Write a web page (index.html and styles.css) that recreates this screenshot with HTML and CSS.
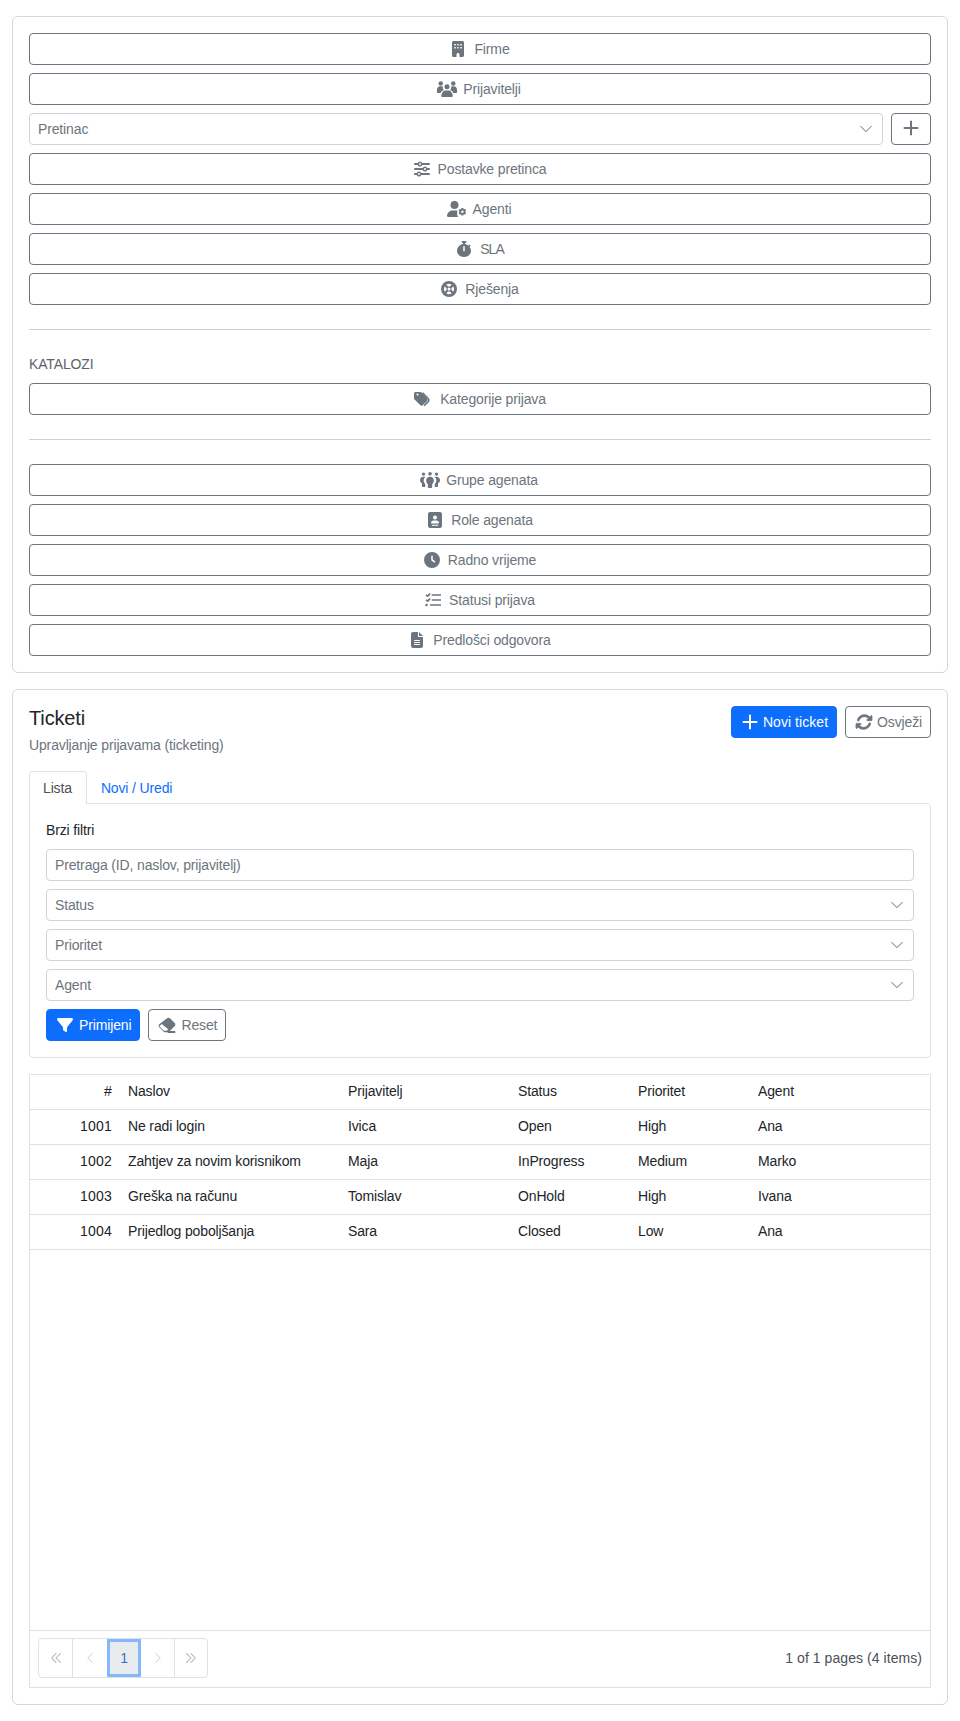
FILE: index.html
```html
<!DOCTYPE html>
<html lang="hr">
<head>
<meta charset="utf-8">
<title>Ticketi</title>
<link rel="stylesheet" href="styles.css">
</head>
<body>
<section class="card">
  <div class="stack">
    <button class="btn btn-wide"><svg class="ico" viewBox="0 0 384 512"><path d="M48 0C21.500 0 0 21.500 0 48v416c0 26.500 21.500 48 48 48h96v-80c0-26.500 21.500-48 48-48s48 21.500 48 48v80h96c26.500 0 48-21.500 48-48V48c0-26.500-21.500-48-48-48H48zm24 96h48v48H72V96zm96 0h48v48h-48V96zm96 0h48v48h-48V96zM72 192h48v48H72v-48zm96 0h48v48h-48v-48zm96 0h48v48h-48v-48z" fill-rule="evenodd"/></svg><span>Firme</span></button>
    <button class="btn btn-wide"><svg class="ico" viewBox="0 0 640 512"><circle cx="320" cy="180" r="80"/><circle cx="120" cy="80" r="72"/><circle cx="520" cy="80" r="72"/><path d="M170 512c-18 0-32-14-32-32 0-90 60-176 134-176h96c74 0 134 86 134 176 0 18-14 32-32 32H170z"/><path d="M0 280c0-60 46-110 100-110h44c16 0 30 4 44 10-8 44 8 84 36 110-50 14-90 50-108 94H30c-16 0-30-14-30-32V280zM640 280c0-60-46-110-100-110h-44c-16 0-30 4-44 10 8 44-8 84-36 110 50 14 90 50 108 94h86c16 0 30-14 30-32V280z"/></svg><span>Prijavitelji</span></button>
    <div class="row">
      <div class="select select-grow"><span>Pretinac</span><svg class="chev" viewBox="0 0 16 16"><path d="M2 5l6 6 6-6"/></svg></div>
      <button class="btn btn-plus"><svg class="ico plus" viewBox="0 0 16 16"><path d="M8 1.500v13M1.500 8h13"/></svg></button>
    </div>
    <button class="btn btn-wide"><svg class="ico" viewBox="0 0 512 512"><path d="M0 416c0-18 14-32 32-32h54a80 80 0 0 1 148 0h246a32 32 0 0 1 0 64H234a80 80 0 0 1-148 0H32c-18 0-32-14-32-32zm160 32a32 32 0 1 0 0-64 32 32 0 0 0 0 64zM352 336a80 80 0 0 1-74-48H32a32 32 0 0 1 0-64h246a80 80 0 0 1 148 0h54a32 32 0 0 1 0 64h-54a80 80 0 0 1-74 48zm32-80a32 32 0 1 0-64 0 32 32 0 0 0 64 0zM192 176a80 80 0 0 1-74-48H32a32 32 0 0 1 0-64h86a80 80 0 0 1 148 0h214a32 32 0 0 1 0 64H266a80 80 0 0 1-74 48zm32-80a32 32 0 1 0-64 0 32 32 0 0 0 64 0z" fill-rule="evenodd"/></svg><span>Postavke pretinca</span></button>
    <button class="btn btn-wide"><svg class="ico" viewBox="0 0 640 512"><circle cx="240" cy="128" r="128"/><path d="M178 304h124c10 0 20 1 30 3-10 20-10 46 0 66-16 24-16 56 0 80 4 24 14 44 28 59H30c-16 0-30-14-30-30 0-98 80-178 178-178z"/><path d="M520 222l16 44 46-8 30 44-30 40 30 42-30 44-46-8-16 44h-56l-16-44-46 8-30-44 30-42-30-40 30-44 46 8 16-44h56zM492 302a40 40 0 1 0 0 80 40 40 0 0 0 0-80z" fill-rule="evenodd"/></svg><span>Agenti</span></button>
    <button class="btn btn-wide"><svg class="ico" viewBox="0 0 448 512"><path d="M176 0h96a32 32 0 0 1 0 64h-16v35c42 6 78 22 106 48l18-18a30 30 0 0 1 42 42l-20 22c30 38 46 84 46 129 0 106-100 190-224 190S0 428 0 322C0 212 80 118 192 99V64h-16a32 32 0 0 1 0-64zm72 184a24 24 0 0 0-48 0v128a24 24 0 0 0 48 0V184z" fill-rule="evenodd"/></svg><span class="caps">SLA</span></button>
    <button class="btn btn-wide"><svg class="ico" viewBox="0 0 512 512"><path d="M256 0a256 256 0 1 1 0 512 256 256 0 0 1 0-512zm-138 168a168 168 0 0 0 0 176l60-60a96 96 0 0 1 0-56l-60-60zm50-50l60 60a96 96 0 0 1 56 0l60-60a168 168 0 0 0-176 0zm226 50l-60 60a96 96 0 0 1 0 56l60 60a168 168 0 0 0 0-176zm-50 226l-60-60a96 96 0 0 1-56 0l-60 60a168 168 0 0 0 176 0zM256 208a48 48 0 1 0 0 96 48 48 0 0 0 0-96z" fill-rule="evenodd"/></svg><span>Rješenja</span></button>
  </div>
  <hr class="rule">
  <div class="section-label">KATALOZI</div>
  <button class="btn btn-wide"><svg class="ico" viewBox="0 0 512 512"><path d="M0 80c0-26 22-48 48-48h150c17 0 33 7 45 19l176 176c25 25 25 65 0 90L286 450c-25 25-65 25-90 0L19 274C7 262 0 246 0 229V80zm112 0a32 32 0 1 0 0 64 32 32 0 0 0 0-64z" fill-rule="evenodd"/><path d="M290 40l182 182c38 38 38 98 0 136L340 490l-36-36 132-132c18-18 18-54 0-72L254 68z"/></svg><span class="after-tag">Kategorije prijava</span></button>
  <hr class="rule">
  <div class="stack">
    <button class="btn btn-wide"><svg class="ico" viewBox="0 0 640 512"><circle cx="320" cy="58" r="58"/><circle cx="112" cy="66" r="54"/><circle cx="528" cy="66" r="54"/><path d="M320 148c70 0 124 52 124 116 0 60-26 98-54 122v94c0 18-14 32-32 32h-76c-18 0-32-14-32-32v-94c-28-24-54-62-54-122 0-64 54-116 124-116z"/><path d="M184 152c-40 26-66 66-66 112 0 52 20 90 50 118v98H96c-18 0-32-14-32-32v-88C26 338 0 306 0 262c0-62 48-110 108-110h76zM456 152c40 26 66 66 66 112 0 52-20 90-50 118v98h72c18 0 32-14 32-32v-88c38-22 64-54 64-98 0-62-48-110-108-110h-76z"/></svg><span>Grupe agenata</span></button>
    <button class="btn btn-wide"><svg class="ico" viewBox="0 0 448 512"><path d="M64 0C29 0 0 29 0 64v384c0 35 29 64 64 64h320c35 0 64-29 64-64V64c0-35-29-64-64-64H64zm160 112a64 64 0 1 1 0 128 64 64 0 0 1 0-128zm-48 160h96c44 0 80 36 80 80 0 9-7 16-16 16H112c-9 0-16-7-16-16 0-44 36-80 80-80zM136 408h176a16 16 0 0 1 0 32H136a16 16 0 0 1 0-32z" fill-rule="evenodd"/></svg><span>Role agenata</span></button>
    <button class="btn btn-wide"><svg class="ico" viewBox="0 0 512 512"><path d="M256 0a256 256 0 1 1 0 512 256 256 0 0 1 0-512zm-24 120v136c0 8 4 16 11 20l96 64 27-40-86-57V120h-48z" fill-rule="evenodd"/></svg><span>Radno vrijeme</span></button>
    <button class="btn btn-wide"><svg class="ico" viewBox="0 0 512 512"><path d="M152 34l32 30-76 84c-6 6-14 10-22 10s-16-3-22-9L15 100l32-32 24 24 81-58zM152 194l32 30-76 84c-6 6-14 10-22 10s-16-3-22-9l-49-49 32-32 24 24 81-58zM216 72h296v48H216V72zm0 160h296v48H216v-48zm-56 160h352v48H160v-48zM48 376a40 40 0 1 1 0 80 40 40 0 0 1 0-80z"/></svg><span>Statusi prijava</span></button>
    <button class="btn btn-wide"><svg class="ico" viewBox="0 0 384 512"><path d="M64 0C29 0 0 29 0 64v384c0 35 29 64 64 64h256c35 0 64-29 64-64V160H256c-18 0-32-14-32-32V0H64zm192 0v128h128L256 0zM112 256h160a16 16 0 0 1 0 32H112a16 16 0 0 1 0-32zm0 64h160a16 16 0 0 1 0 32H112a16 16 0 0 1 0-32zm0 64h160a16 16 0 0 1 0 32H112a16 16 0 0 1 0-32z" fill-rule="evenodd"/></svg><span>Predlošci odgovora</span></button>
  </div>
</section>

<section class="card card-main">
  <header class="head">
    <div>
      <h1 class="title">Ticketi</h1>
      <div class="subtitle">Upravljanje prijavama (ticketing)</div>
    </div>
    <div class="head-actions">
      <button class="btn btn-primary"><svg class="ico plus" viewBox="0 0 16 16"><path d="M8 1.500v13M1.500 8h13"/></svg><span class="wide-text">Novi ticket</span></button>
      <button class="btn"><svg class="ico ico-bold" viewBox="0 0 512 512"><path d="M105 203a176 176 0 0 1 291-66l-45 46c-11 11-3 29 12 29h133c9 0 16-7 16-16V63c0-15-18-23-29-12l-41 41A240 240 0 0 0 45 183c-6 18 3 37 20 44s35-7 40-24zM407 309a176 176 0 0 1-291 66l45-46c11-11 3-29-12-29H16c-9 0-16 7-16 16v133c0 15 18 23 29 12l41-41a240 240 0 0 0 397-95c6-18-3-37-20-44s-35 7-40 24z"/></svg><span>Osvježi</span></button>
    </div>
  </header>
  <nav class="tabs">
    <div class="tab tab-active">Lista</div>
    <div class="tab">Novi / Uredi</div>
  </nav>
  <div class="panel">
    <div class="panel-label">Brzi filtri</div>
    <div class="stack">
      <div class="select">Pretraga (ID, naslov, prijavitelj)</div>
      <div class="select"><span>Status</span><svg class="chev" viewBox="0 0 16 16"><path d="M2 5l6 6 6-6"/></svg></div>
      <div class="select"><span>Prioritet</span><svg class="chev" viewBox="0 0 16 16"><path d="M2 5l6 6 6-6"/></svg></div>
      <div class="select"><span>Agent</span><svg class="chev" viewBox="0 0 16 16"><path d="M2 5l6 6 6-6"/></svg></div>
      <div class="panel-actions">
        <button class="btn btn-primary"><svg class="ico" viewBox="0 0 512 512"><path d="M4 58C11 42 27 32 44 32h424c17 0 33 10 40 26 7 16 4 34-7 47L320 328v120c0 13-7 24-18 29-11 5-24 4-34-3l-64-48c-8-6-12-15-12-26v-72L11 105C0 92-3 74 4 58z"/></svg><span>Primijeni</span></button>
        <button class="btn"><svg class="ico" viewBox="0 0 576 512"><path d="M290 40c25-25 66-25 91 0l155 155c25 25 25 66 0 91L336 486H200L40 326c-25-25-25-66 0-91L290 40zM70 270l-12 12c-8 8-8 20 0 28l130 130h90l50-50L120 220z" fill-rule="evenodd"/><path d="M340 448h188a32 32 0 0 1 0 64H300z"/></svg><span>Reset</span></button>
      </div>
    </div>
  </div>
  <div class="grid">
    <table class="data">
      <colgroup><col class="c-id"><col class="c-title"><col class="c-rep"><col class="c-st"><col class="c-pr"><col></colgroup>
      <thead><tr><th class="num">#</th><th>Naslov</th><th>Prijavitelj</th><th>Status</th><th>Prioritet</th><th>Agent</th></tr></thead>
      <tbody>
        <tr><td class="num">1001</td><td>Ne radi login</td><td>Ivica</td><td>Open</td><td>High</td><td>Ana</td></tr>
        <tr><td class="num">1002</td><td>Zahtjev za novim korisnikom</td><td>Maja</td><td>InProgress</td><td>Medium</td><td>Marko</td></tr>
        <tr><td class="num">1003</td><td>Greška na računu</td><td>Tomislav</td><td>OnHold</td><td>High</td><td>Ivana</td></tr>
        <tr><td class="num">1004</td><td>Prijedlog poboljšanja</td><td>Sara</td><td>Closed</td><td>Low</td><td>Ana</td></tr>
      </tbody>
    </table>
    <footer class="pager-bar">
      <div class="pager">
        <span class="pg"><svg class="pg-ico" viewBox="0 0 16 16"><path d="M8 3L3 8l5 5M13 3L8 8l5 5"/></svg></span>
        <span class="pg pg-off"><svg class="pg-ico" viewBox="0 0 16 16"><path d="M10.500 3L5.500 8l5 5"/></svg></span>
        <span class="pg pg-on">1</span>
        <span class="pg pg-off"><svg class="pg-ico" viewBox="0 0 16 16"><path d="M5.500 3l5 5-5 5"/></svg></span>
        <span class="pg pg-last"><svg class="pg-ico" viewBox="0 0 16 16"><path d="M3 3l5 5-5 5M8 3l5 5-5 5"/></svg></span>
      </div>
      <div class="pager-info">1 of 1 pages (4 items)</div>
    </footer>
  </div>
</section>
</body>
</html>
```
FILE: styles.css
```css
* { box-sizing: border-box; }
html, body { margin: 0; padding: 0; background: #fff; }
body {
  padding: 16px 12px;
  font-family: "Liberation Sans", Arial, sans-serif;
  font-size: 14px;
  line-height: 21px;
  letter-spacing: -0.14px;
  color: #212529;
}
.card {
  border: 1px solid #d5d8db;
  border-radius: 6px;
  padding: 16px;
  background: #fff;
}
.card-main { margin-top: 16px; height: 1016px; }
.stack { display: flex; flex-direction: column; gap: 8px; }
.row { display: flex; gap: 8px; }
.btn {
  display: inline-flex;
  align-items: center;
  justify-content: center;
  gap: 4px;
  height: 32px;
  padding: 0 8px;
  background: #fff;
  border: 1px solid #6c757d;
  border-radius: 4px;
  color: #6c757d;
  font: inherit;
  letter-spacing: inherit;
}
.btn-wide { width: 100%; gap: 6px; }
.btn-wide span { margin-right: 2px; }
.btn-wide .after-tag { margin-left: 2px; }
.btn-wide .caps { letter-spacing: -1px; }
.wide-text { letter-spacing: 0.05px; }
.btn-plus { width: 40px; flex: none; padding: 0 0 2px; }
.btn-primary { background: #0d6efd; border-color: #0d6efd; color: #fff; }
.ico { width: 20px; height: 16px; fill: currentColor; flex: none; }
.ico-bold { stroke: currentColor; stroke-width: 24; }
.plus { fill: none; stroke: currentColor; stroke-width: 2; stroke-linecap: round; }
.select {
  display: flex;
  align-items: center;
  justify-content: space-between;
  height: 32px;
  padding: 0 8px;
  border: 1px solid #ced4da;
  border-radius: 4px;
  color: #6c757d;
  background: #fff;
}
.select-grow { flex: 1; }
.chev { width: 14px; height: 14px; margin-right: 1px; fill: none; stroke: #495057; stroke-width: 1; stroke-linecap: round; stroke-linejoin: round; }
.rule { border: 0; border-top: 1px solid #cdcfd1; margin: 24px 0; }
.section-label { margin-bottom: 8px; height: 21px; color: #5c636a; }
.head { display: flex; justify-content: space-between; align-items: flex-start; }
.title { margin: 0; font-size: 20px; font-weight: 400; line-height: 24px; color: #212529; }
.subtitle { margin-top: 5px; color: #6c757d; }
.head-actions { display: flex; gap: 8px; }
.head-actions .btn { gap: 3px; }
.tabs { display: flex; margin-top: 15px; height: 33px; }
.tab { height: 33px; padding: 7px 14px 0; color: #0d6efd; }
.tab-active {
  padding: 6px 14px 0 13px;
  color: #495057;
  background: #fff;
  border: 1px solid #dee2e6;
  border-bottom: 0;
  border-radius: 4px 4px 0 0;
  position: relative;
  z-index: 1;
}
.panel {
  border: 1px solid #dee2e6;
  border-radius: 0 4px 4px 4px;
  margin-top: -1px;
  padding: 16px;
}
.panel-label { margin-bottom: 8px; height: 21px; }
.panel-actions { display: flex; gap: 8px; }
.grid {
  display: flex;
  flex-direction: column;
  justify-content: space-between;
  margin-top: 16px;
  height: 614px;
  border: 1px solid #dee2e6;
}
.data { width: 100%; border-collapse: collapse; table-layout: fixed; }
.c-id { width: 90px; }
.c-title { width: 220px; }
.c-rep { width: 170px; }
.c-st { width: 120px; }
.c-pr { width: 120px; }
th, td { font-weight: 400; text-align: left; padding: 0 8px; border-bottom: 1px solid #dee2e6; color: #212529; height: 35px; }
th { height: 34px; }
th.num, td.num { text-align: right; letter-spacing: 0.2px; }
.pager-bar {
  display: flex;
  align-items: flex-start;
  justify-content: space-between;
  height: 57px;
  padding: 7px 8px 0;
  border-top: 1px solid #dee2e6;
}
.pager { display: flex; border: 1px solid #dee2e6; border-radius: 4px; height: 40px; }
.pg {
  width: 34px;
  display: flex;
  align-items: center;
  justify-content: center;
  color: #adb5bd;
  border-right: 1px solid #dee2e6;
}
.pg-last { width: 32px; border-right: 0; }
.pg-off { color: #d3d7db; border-right: 0; }
.pg-off:nth-child(4) { border-right: 1px solid #dee2e6; }
.pg-on { background: #e9ecef; border: 3px solid #86b7fe; color: #2f6fd0; }
.pg-ico { width: 14px; height: 14px; fill: none; stroke: currentColor; stroke-width: 1.200; stroke-linecap: round; stroke-linejoin: round; }
.pager-info { color: #495057; letter-spacing: 0.06px; line-height: 40px; }
```
